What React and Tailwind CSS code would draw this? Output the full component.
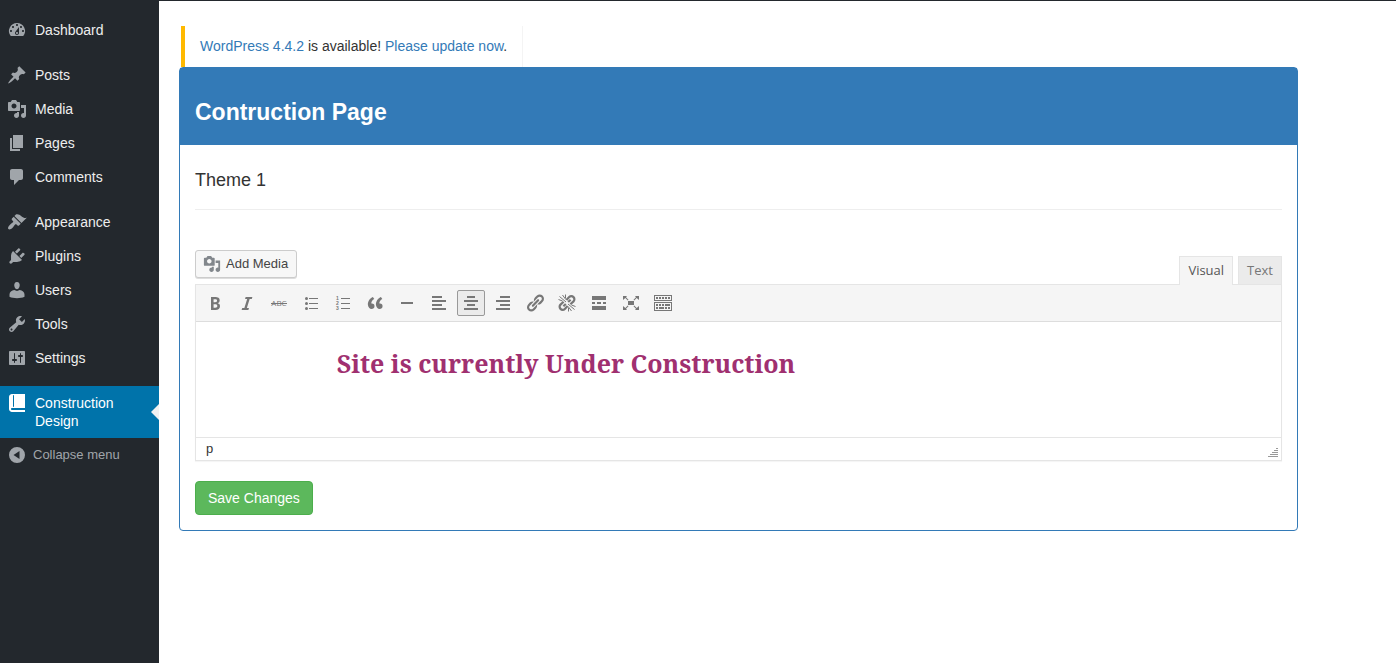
import React from "react";

const PATHS = {
  dashboard:
    "M3.76 16h12.48A7.998 7.998 0 0 0 10 3a7.998 7.998 0 0 0-6.24 13zM10 4c.55 0 1 .45 1 1s-.45 1-1 1-1-.45-1-1 .45-1 1-1zM6 6c.55 0 1 .45 1 1s-.45 1-1 1-1-.45-1-1 .45-1 1-1zm8 0c.55 0 1 .45 1 1s-.45 1-1 1-1-.45-1-1 .45-1 1-1zm-5.37 5.55L12 7v6c0 1.1-.9 2-2 2s-2-.9-2-2c0-.57.24-1.08.63-1.45zM4 10c.55 0 1 .45 1 1s-.45 1-1 1-1-.45-1-1 .45-1 1-1zm12 0c.55 0 1 .45 1 1s-.45 1-1 1-1-.45-1-1 .45-1 1-1zm-5 3c0-.55-.45-1-1-1s-1 .45-1 1 .45 1 1 1 1-.45 1-1z",
  posts:
    "M10.44 3.02l1.82-1.82 6.36 6.35-1.83 1.82c-1.05-.68-2.48-.57-3.41.36l-.75.75c-.92.93-1.04 2.35-.35 3.41l-1.83 1.82-2.41-2.41-2.8 2.79c-.42.42-3.38 2.71-3.8 2.29s1.86-3.39 2.28-3.81l2.79-2.79L4.1 9.36l1.83-1.82c1.05.69 2.48.57 3.4-.36l.75-.75c.93-.92 1.05-2.35.36-3.41z",
  media:
    "M13 11V4c0-.55-.45-1-1-1h-1.67L9 1H5L3.67 3H2c-.55 0-1 .45-1 1v7c0 .55.45 1 1 1h10c.55 0 1-.45 1-1zM7 4.5c1.38 0 2.5 1.12 2.5 2.5S8.38 9.5 7 9.5 4.5 8.38 4.5 7 5.62 4.5 7 4.5zM14 6h5v10.5c0 1.38-1.12 2.5-2.5 2.5S14 17.88 14 16.5s1.12-2.5 2.5-2.5c.17 0 .34.02.5.05V9h-3V6zm-4 8.05V13h2v3.5c0 1.38-1.12 2.5-2.5 2.5S7 17.88 7 16.5 8.12 14 9.5 14c.17 0 .34.02.5.05z",
  pages: "M6 15V2h10v13H6zm-1 1h8v2H3V5h2v11z",
  comments:
    "M5 2h9c1.1 0 2 .9 2 2v7c0 1.1-.9 2-2 2h-2l-5 5v-5H5c-1.1 0-2-.9-2-2V4c0-1.1.9-2 2-2z",
  appearance:
    "M14.48 11.06L7.41 3.99l1.5-1.5c.5-.56 2.3-.47 3.51.32 1.21.8 1.43 1.28 2.91 2.1 1.18.64 2.45 1.26 4.45.85zm-.71.71L6.7 4.7 4.93 6.47c-.39.39-.39 1.02 0 1.41l1.06 1.06c.39.39.39 1.03 0 1.42-.6.6-1.43 1.11-2.21 1.69-.35.26-.7.53-1.01.84C1.43 14.23.4 16.08 1.4 17.07c.99 1 2.84-.03 4.18-1.36.31-.31.58-.66.85-1.02.57-.78 1.08-1.61 1.69-2.21.39-.39 1.02-.39 1.41 0l1.06 1.06c.39.39 1.02.39 1.41 0z",
  plugins:
    "M13.11 4.36L9.87 7.6 8 5.73l3.24-3.24c.35-.34 1.05-.2 1.56.32.52.51.66 1.21.31 1.55zm-8 1.77l.91-1.12 9.01 9.01-1.19.84c-.71.71-2.63 1.16-3.82 1.16H6.14L4.9 17.26c-.59.59-1.54.59-2.12 0-.59-.58-.59-1.53 0-2.12l1.24-1.24v-3.88c0-1.13.4-3.19 1.09-3.89zm7.26 3.97l3.24-3.24c.34-.35 1.04-.21 1.55.31.52.51.66 1.21.31 1.55l-3.24 3.25z",
  users:
    "M10 9.25c-2.27 0-2.73-3.44-2.73-3.44C7 4.02 7.82 2 9.97 2c2.16 0 2.98 2.02 2.71 3.81 0 0-.41 3.44-2.68 3.44zM10 11L12.72 10c2.6.3 4.78 2 4.78 4.53v2.2c-2 1-4.6 1.42-7.5 1.42s-5.5-.42-7.5-1.42v-2.2C2.5 12 4.7 10.3 7.28 10z",
  tools:
    "M16.68 9.77c-1.34 1.34-3.3 1.67-4.95.99l-5.41 6.52c-.99.99-2.59.99-3.58 0s-.99-2.59 0-3.57l6.52-5.42c-.68-1.65-.35-3.61.99-4.95 1.28-1.28 3.12-1.62 4.72-1.06l-2.89 2.89 2.82 2.82 2.86-2.87c.53 1.58.18 3.39-1.08 4.65zM3.81 16.21c.4.39 1.04.39 1.43 0 .4-.4.4-1.04 0-1.43-.39-.4-1.03-.4-1.43 0-.39.39-.39 1.03 0 1.43z",
  settings:
    "M18 16V4c0-.55-.45-1-1-1H3c-.55 0-1 .45-1 1v12c0 .55.45 1 1 1h14c.55 0 1-.45 1-1zM8 11h1c.55 0 1 .45 1 1s-.45 1-1 1H8v1.5c0 .28-.22.5-.5.5s-.5-.22-.5-.5V13H6c-.55 0-1-.45-1-1s.45-1 1-1h1V5.5c0-.28.22-.5.5-.5s.5.22.5.5V11zm5-2h-1c-.55 0-1-.45-1-1s.45-1 1-1h1V5.5c0-.28.22-.5.5-.5s.5.22.5.5V7h1c.55 0 1 .45 1 1s-.45 1-1 1h-1v5.5c0 .28-.22.5-.5.5s-.5-.22-.5-.5V9z",
  book: "M5 16h13v2H5c-1.66 0-3-1.34-3-3V3c0-1.66 1.34-3 3-3h13v14H5c-.55 0-1 .45-1 1s.45 1 1 1zm2-3.5v-11c0-.28-.22-.5-.5-.5s-.5.22-.5.5v11c0 .28.22.5.5.5s.5-.22.5-.5z",
  collapse: "M10 2a8 8 0 1 0 0 16a8 8 0 1 0 0-16zM12.5 6v8L6.5 10z",
  bold: "M6 4v13h4.54c1.37 0 2.46-.33 3.26-1 .8-.66 1.2-1.58 1.2-2.77 0-.84-.17-1.51-.51-2.01s-.9-.85-1.67-1.03v-.09c.57-.1 1.02-.4 1.36-.9s.51-1.13.51-1.91c0-1.14-.39-1.98-1.17-2.5C12.75 4.26 11.5 4 9.78 4H6zm2.57 5.15V6.26h1.36c.73 0 1.27.11 1.61.32.34.22.51.58.51 1.07 0 .54-.16.92-.47 1.15s-.82.35-1.51.35h-1.5zm0 2.19h1.6c1.44 0 2.16.53 2.16 1.61 0 .6-.17 1.05-.51 1.34s-.86.43-1.57.43H8.57v-3.38z",
  italic: "M14.78 6h-2.13l-2.8 9h2.12l-.62 2H4.6l.62-2h2.14l2.8-9H8.03l.62-2h6.75z",
  quote:
    "M9.49 13.22c0-.74-.2-1.38-.61-1.9-.62-.78-1.83-.88-2.53-.72-.29-1.65 1.11-3.75 2.92-4.65L7.88 4c-2.73 1.3-5.42 4.28-4.96 8.05C3.21 14.43 4.59 16 6.54 16c.85 0 1.56-.25 2.12-.75s.83-1.18.83-2.03zm8.05 0c0-.74-.2-1.38-.61-1.9-.63-.78-1.83-.88-2.53-.72-.29-1.65 1.11-3.75 2.92-4.65L15.93 4c-2.73 1.3-5.41 4.28-4.95 8.05.29 2.38 1.66 3.95 3.61 3.95.85 0 1.56-.25 2.12-.75s.83-1.18.83-2.03z",
  link: "M17.74 2.76c1.68 1.69 1.68 4.41 0 6.1l-1.53 1.52c-1.12 1.12-2.7 1.47-4.14 1.09l2.62-2.61.76-.77.76-.76c.84-.84.84-2.2 0-3.04-.84-.85-2.2-.85-3.04 0l-.77.76-3.38 3.38c-.37-1.44-.02-3.02 1.1-4.14l1.52-1.53c1.69-1.68 4.42-1.68 6.1 0zM8.59 13.43l5.34-5.34c.42-.42.42-1.1 0-1.52-.44-.43-1.13-.39-1.53 0l-5.33 5.34c-.42.42-.42 1.1 0 1.52.44.43 1.13.39 1.52 0zm-.76 2.29l4.14-4.15c.38 1.44.03 3.02-1.09 4.14l-1.52 1.53c-1.69 1.68-4.41 1.68-6.1 0-1.68-1.68-1.68-4.42 0-6.1l1.53-1.52c1.12-1.12 2.7-1.47 4.14-1.1l-4.14 4.15c-.85.84-.85 2.2 0 3.05.84.84 2.2.84 3.04 0z",
  alignLeft: "M3 3h10v2H3zM3 7h14v2H3zM3 11h10v2H3zM3 15h14v2H3z",
  alignCenter: "M6 3h8v2H6zM3 7h14v2H3zM6 11h8v2H6zM3 15h14v2H3z",
  alignRight: "M7 3h10v2H7zM3 7h14v2H3zM7 11h10v2H7zM3 15h14v2H3z",
  rule: "M4 9h12v2H4z",
  more: "M3 3h14v4H3zM3 9h3v2H3zM8 9h4v2H8zM14 9h3v2h-3zM3 13h14v4H3z",
  fullscreen:
    "M7 8h6v4H7zM2 3h4L5 4.3 7.5 6.8 6.8 7.5 4.3 5 2 7zM18 3h-4l1 1.3-2.5 2.5.7.7L15.7 5 18 7zM2 17h4l-1-1.3 2.5-2.5-.7-.7L4.3 15 2 13zM18 17h-4l1-1.3-2.5-2.5.7-.7 2.5 2.5L18 13z",
  keyboard:
    "M1 2h18v6H1zM2 3v4h16V3zM1 9h18v9H1zM2 10v7h16v-7zM3 4h2v2H3zM6 4h2v2H6zM9 4h2v2H9zM12 4h2v2h-2zM15 4h2v2h-2zM3 11h2v2H3zM6 11h2v2H6zM9 11h2v2H9zM12 11h5v2h-5zM3 14h2v2H3zM6 14h5v2H6zM12 14h2v2h-2zM15 14h2v2h-2z",
};

function Icon({ name, className = "" }) {
  return (
    <svg
      viewBox="0 0 20 20"
      aria-hidden="true"
      fill="currentColor"
      fillRule="evenodd"
      className={"size-5 shrink-0 " + className}
    >
      <path d={PATHS[name]} />
    </svg>
  );
}

function StrikeIcon() {
  return (
    <svg viewBox="0 0 20 20" aria-hidden="true" fill="currentColor" className="size-5">
      <text x="10" y="13" textAnchor="middle" fontSize="8" fontFamily="Open Sans">
        ABC
      </text>
      <path d="M2 10h16v1H2z" />
    </svg>
  );
}

function BulletIcon() {
  return (
    <svg viewBox="0 0 20 20" aria-hidden="true" fill="currentColor" className="size-5">
      <circle cx="5.5" cy="5.5" r="1.5" />
      <circle cx="5.5" cy="10.5" r="1.5" />
      <circle cx="5.5" cy="15.5" r="1.5" />
      <path d="M8 5h9v1H8zM8 10h9v1H8zM8 15h9v1H8z" />
    </svg>
  );
}

function NumberIcon() {
  return (
    <svg viewBox="0 0 20 20" aria-hidden="true" fill="currentColor" className="size-5">
      <g fontSize="5" fontFamily="Liberation Sans" fontWeight="bold">
        <text x="3" y="7">1</text>
        <text x="3" y="12">2</text>
        <text x="3" y="17">3</text>
      </g>
      <path d="M8 5h9v1H8zM8 10h9v1H8zM8 15h9v1H8z" />
    </svg>
  );
}

function UnlinkIcon() {
  return (
    <svg viewBox="0 0 20 20" aria-hidden="true" fill="none" stroke="currentColor" className="size-5">
      <path strokeWidth="2.2" d="M9.4 7L12.2 4.1a3 3 0 0 1 4.3 4.3L13.4 11.2 M11.2 9L13.6 6.8" />
      <path strokeWidth="2.2" d="M10.6 13L7.8 15.9a3 3 0 0 1-4.3-4.3L6.6 8.8 M8.8 11L6.4 13.2" />
      <path d="M2.5 3.5L9 9M5.5 2L8.8 6.5M8.5 1.5v3.7M1.5 6.5L5.5 8M17.5 16.5L11 11M14.5 18L11.2 13.5M11.5 18.5v-3.7M18.5 13.5L14.5 12" />
    </svg>
  );
}

const MENU = [
  [["Dashboard", "dashboard"]],
  [
    ["Posts", "posts"],
    ["Media", "media"],
    ["Pages", "pages"],
    ["Comments", "comments"],
  ],
  [
    ["Appearance", "appearance"],
    ["Plugins", "plugins"],
    ["Users", "users"],
    ["Tools", "tools"],
    ["Settings", "settings"],
  ],
];

const TOOLS = [
  ["Bold", "bold"],
  ["Italic", "italic"],
  ["Strikethrough", StrikeIcon],
  ["Bulleted list", BulletIcon],
  ["Numbered list", NumberIcon],
  ["Blockquote", "quote"],
  ["Horizontal line", "rule"],
  ["Align left", "alignLeft"],
  ["Align center", "alignCenter"],
  ["Align right", "alignRight"],
  ["Insert link", "link"],
  ["Remove link", UnlinkIcon],
  ["Read more", "more"],
  ["Fullscreen", "fullscreen"],
  ["Toolbar toggle", "keyboard"],
];

function Sidebar() {
  return (
    <nav aria-label="Admin menu" className="w-[159px] shrink-0 bg-[#23282d] pt-3 text-sm text-[#eee]">
      {MENU.map((group, i) => (
        <ul key={i} className="mb-[11px]">
          {group.map(([label, icon]) => (
            <li key={label}>
              <a href="#" className="flex h-[34px] items-center gap-2 pl-[7px]">
                <Icon name={icon} className="text-[#a0a5aa]" />
                {label}
              </a>
            </li>
          ))}
        </ul>
      ))}
      <a
        href="#"
        aria-current="page"
        className="relative flex gap-2 bg-[#0073aa] py-2 pl-[7px] leading-[18px] text-white"
      >
        <Icon name="book" />
        <span className="w-24">Construction Design</span>
        <span className="absolute top-1/2 right-0 -translate-y-1/2 border-8 border-l-0 border-transparent border-r-[#f1f1f1]" />
      </a>
      <button type="button" className="flex h-[34px] items-center gap-[6px] pl-[7px] text-[13px] text-[#a0a5aa]">
        <Icon name="collapse" />
        Collapse menu
      </button>
    </nav>
  );
}

function Toolbar() {
  return (
    <div
      role="toolbar"
      aria-label="Formatting"
      className="flex flex-wrap gap-1 border-b border-[#ddd] bg-[#f5f5f5] px-[5px] py-[5px] text-[#777]"
    >
      {TOOLS.map(([label, Glyph]) => (
        <button
          key={label}
          type="button"
          aria-label={label}
          aria-pressed={label === "Align center"}
          className="flex h-[26px] w-7 items-center justify-center rounded-xs border border-transparent aria-pressed:border-[#999] aria-pressed:bg-[#ebebeb]"
        >
          {typeof Glyph === "string" ? <Icon name={Glyph} /> : <Glyph />}
        </button>
      ))}
    </div>
  );
}

function Editor() {
  return (
    <section aria-label="Editor">
      <div className="flex items-end justify-between">
        <button
          type="button"
          className="mb-[6px] flex h-[28px] items-center gap-1 rounded-[3px] border border-[#ccc] bg-[#f7f7f7] pr-2 pl-[6px] text-[13px] text-[#444] shadow-[0_1px_0_#ddd]"
        >
          <Icon name="media" className="scale-90 text-[#82878c]" />
          Add Media
        </button>
        <div role="tablist" className="flex gap-[5px] font-['Open_Sans',sans-serif] text-[13px]">
          <button
            type="button"
            role="tab"
            aria-selected="true"
            className="relative z-10 -mb-px h-[29px] border border-b-0 border-[#e5e5e5] bg-[#f5f5f5] px-2 pb-[2px] text-[#555]"
          >
            Visual
          </button>
          <button
            type="button"
            role="tab"
            aria-selected="false"
            className="h-[28px] border border-b-0 border-[#e5e5e5] bg-[#ebebeb] px-2 text-[#777]"
          >
            Text
          </button>
        </div>
      </div>
      <div className="border border-[#e5e5e5] shadow-[0_1px_1px_rgba(0,0,0,0.04)]">
        <Toolbar />
        <div
          role="textbox"
          aria-label="Page content"
          contentEditable
          suppressContentEditableWarning
          className="min-h-[115px] pt-6 outline-none"
        >
          <p className="max-w-[740px] text-center font-['Noto_Serif','DejaVu_Serif',serif] text-[25px] leading-[34px] font-bold text-[#a03070]">
            Site is currently Under Construction
          </p>
        </div>
        <div className="flex h-[23px] items-center justify-between border-t border-[#e5e5e5] pr-[3px] pl-[10px]">
          <span className="text-[13px] text-[#333]">p</span>
          <svg viewBox="0 0 10 10" aria-hidden="true" fill="#999" className="mt-2 size-[10px]">
            <path d="M8 0h2v1H8zM6 2h4v1H6zM4 4h6v1H4zM2 6h8v1H2zM0 8h10v1H0z" />
          </svg>
        </div>
      </div>
    </section>
  );
}

export default function App() {
  return (
    <div className="flex min-h-screen flex-col border-t border-[#23282d] bg-white font-['Liberation_Sans',Arial,sans-serif] text-sm text-[#333]">
      <div className="flex grow">
        <Sidebar />
        <main className="min-w-0 grow pt-[25px] pr-[98px] pl-5">
          <div className="ml-[2px] flex h-[41px] w-fit items-center border-r border-l-4 border-r-[#f4f4f4] border-l-[#ffb900] px-[15px] pb-[2px]">
            <p>
              <a href="#" className="text-[#337ab7]">WordPress 4.4.2</a> is available!{" "}
              <a href="#" className="text-[#337ab7]">Please update now</a>.
            </p>
          </div>
          <section className="rounded border border-[#337ab7]">
            <header className="bg-[#337ab7] px-[15px] pt-7 pb-[17px]">
              <h1 className="text-[23px] leading-8 font-bold text-white">Contruction Page</h1>
            </header>
            <div className="p-[15px]">
              <h2 className="pt-[10px] text-lg leading-5 font-medium">Theme 1</h2>
              <hr className="mt-[19px] mb-10 border-[#eee]" />
              <Editor />
              <button
                type="submit"
                className="mt-5 h-[34px] rounded border border-[#4cae4c] bg-[#5cb85c] px-3 text-sm text-white"
              >
                Save Changes
              </button>
            </div>
          </section>
        </main>
      </div>
    </div>
  );
}
